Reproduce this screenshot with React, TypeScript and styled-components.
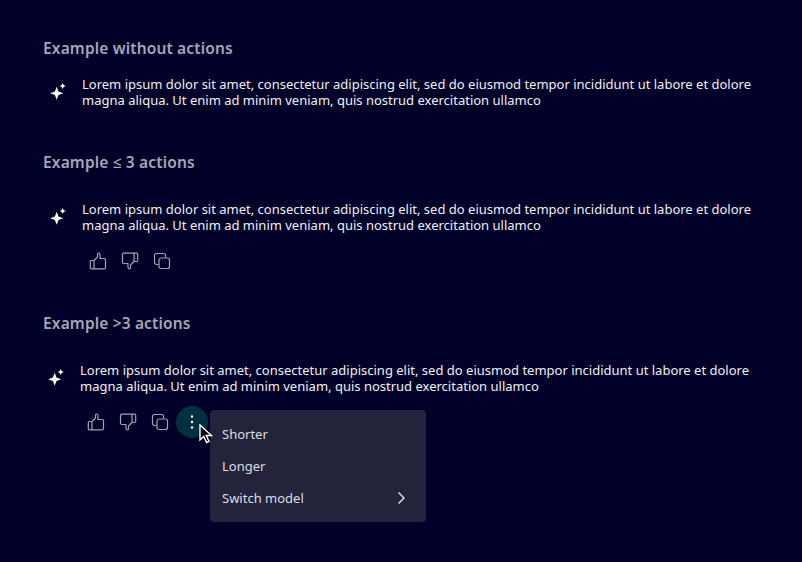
import * as React from 'react';
import styled, { createGlobalStyle } from 'styled-components';

const GlobalStyle = createGlobalStyle`
  html, body {
    margin: 0;
    padding: 0;
    background: #000028;
  }
  body {
    font-family: "Noto Sans", "Open Sans", sans-serif;
  }
`;

const Page = styled.main`
  width: 802px;
  height: 562px;
  box-sizing: border-box;
  padding: 39px 0 0 43px;
  overflow: hidden;
  background: #000028;
`;
const Heading = styled.h2<{ $after: number }>`
  margin: 0 0 ${(p) => p.$after}px;
  height: 18px;
  font-size: 15.5px;
  line-height: 18px;
  font-weight: 600;
  color: #a6a6b6;
  letter-spacing: 0.15px;
`;
const Example = styled.section<{ $after: number }>`
  margin-bottom: ${(p) => p.$after}px;
`;
const Message = styled.div<{ $shift: number }>`
  display: flex;
  align-items: center;
  gap: 15px;
  padding-left: ${(p) => p.$shift}px;
`;
const Spark = styled.svg`
  width: 18px;
  height: 18px;
  flex: none;
  fill: #fff;
`;
const Body = styled.p`
  margin: 0;
  width: 690px;
  font-size: 13px;
  line-height: 16px;
  color: #f0f0f3;
`;
const Actions = styled.div<{ $shift: number }>`
  position: relative;
  display: flex;
  align-items: center;
  margin: 12px 0 0 ${(p) => p.$shift}px;
`;
const Action = styled.button<{ $active?: boolean }>`
  width: 32px;
  height: 32px;
  padding: 0;
  display: flex;
  align-items: center;
  justify-content: center;
  border: 0;
  border-radius: 50%;
  background: ${(p) => (p.$active ? '#00303f' : 'transparent')};
  color: ${(p) => (p.$active ? '#fff' : '#a3a3b4')};
`;
const Glyph = styled.svg`
  width: 18px;
  height: 18px;
  fill: none;
  stroke: currentColor;
  stroke-width: 1.2;
  stroke-linejoin: round;
  stroke-linecap: round;
`;
const DotsGlyph = styled.svg`
  width: 18px;
  height: 18px;
  fill: #fff;
`;
const Menu = styled.ul`
  position: absolute;
  left: 130px;
  top: 4px;
  width: 216px;
  margin: 0;
  padding: 8px 0;
  box-sizing: border-box;
  list-style: none;
  background: #23233c;
  border-radius: 4px;
`;
const MenuItem = styled.li`
  display: flex;
  align-items: center;
  justify-content: space-between;
  height: 32px;
  padding: 0 17px 0 12px;
  font-size: 13px;
  color: #dedee4;
`;
const Chevron = styled.svg`
  width: 14px;
  height: 14px;
  fill: none;
  stroke: #e6e6ea;
  stroke-width: 1.4;
`;
const Cursor = styled.svg`
  position: absolute;
  left: 119px;
  top: 18px;
  width: 14px;
  height: 20px;
`;

const LOREM =
  'Lorem ipsum dolor sit amet, consectetur adipiscing elit, sed do eiusmod tempor incididunt ut labore et dolore magna aliqua. Ut enim ad minim veniam, quis nostrud exercitation ullamco';

const SparkIcon = () => (
  <Spark viewBox="0 0 18 18">
    <path d="M7.700 3.800 9.500 8.500 14.200 10.300 9.500 12.100 7.700 16.800 5.900 12.100 1.200 10.300 5.900 8.500Z" />
    <path d="M13.700 0 14.600 2.100 16.700 3 14.600 3.900 13.700 6 12.800 3.900 10.700 3 12.800 2.100Z" />
  </Spark>
);

const THUMB =
  'M5 8.500H2.500a1.200 1.200 0 0 0-1.200 1.200v6a1.200 1.200 0 0 0 1.200 1.200H15a1.500 1.500 0 0 0 1.500-1.500V8a1.500 1.500 0 0 0-1.500-1.500h-4V3c0-1.200-.7-2-1.600-2S8.500 1.800 8.500 2.500V5L5 8.500v8.400';

const ThumbUp = () => (
  <Glyph viewBox="0 0 18 18">
    <path d={THUMB} />
  </Glyph>
);
const ThumbDown = () => (
  <Glyph viewBox="0 0 18 18">
    <path d={THUMB} transform="rotate(180 9 9)" />
  </Glyph>
);
const Copy = () => (
  <Glyph viewBox="0 0 18 18">
    <path d="M5 12.500H3.500a2 2 0 0 1-2-2V3.500a2 2 0 0 1 2-2h7a2 2 0 0 1 2 2V5" />
    <rect x="6" y="6" width="10.500" height="10.500" rx="2" />
  </Glyph>
);

const Dots = () => (
  <DotsGlyph viewBox="0 0 18 18">
    <circle cx="9" cy="3.500" r="1.200" />
    <circle cx="9" cy="9" r="1.200" />
    <circle cx="9" cy="14.500" r="1.200" />
  </DotsGlyph>
);

const App: React.FC = () => (
  <>
    <GlobalStyle />
    <Page>
      <Example $after={45}>
        <Heading $after={19}>Example without actions</Heading>
        <Message $shift={6}>
          <SparkIcon />
          <Body>{LOREM}</Body>
        </Message>
      </Example>
      <Example $after={37}>
        <Heading $after={30}>Example ≤ 3 actions</Heading>
        <Message $shift={6}>
          <SparkIcon />
          <Body>{LOREM}</Body>
        </Message>
        <Actions $shift={39}>
          <Action><ThumbUp /></Action>
          <Action><ThumbDown /></Action>
          <Action><Copy /></Action>
        </Actions>
      </Example>
      <Example $after={0}>
        <Heading $after={30}>Example &gt;3 actions</Heading>
        <Message $shift={4}>
          <SparkIcon />
          <Body>{LOREM}</Body>
        </Message>
        <Actions $shift={37}>
          <Action><ThumbUp /></Action>
          <Action><ThumbDown /></Action>
          <Action><Copy /></Action>
          <Action $active><Dots /></Action>
          <Menu>
            <MenuItem>Shorter</MenuItem>
            <MenuItem>Longer</MenuItem>
            <MenuItem>
              Switch model
              <Chevron viewBox="0 0 14 14">
                <path d="M3.500 1.500 9 7l-5.500 5.500" />
              </Chevron>
            </MenuItem>
          </Menu>
          <Cursor viewBox="0 0 14 20">
            <path d="M1 1v15l3.800-3.500 2.700 6 2.500-1.200-2.700-5.800H12.500Z" fill="#000" stroke="#fff" strokeWidth="1.400" />
          </Cursor>
        </Actions>
      </Example>
    </Page>
  </>
);
export default App;
